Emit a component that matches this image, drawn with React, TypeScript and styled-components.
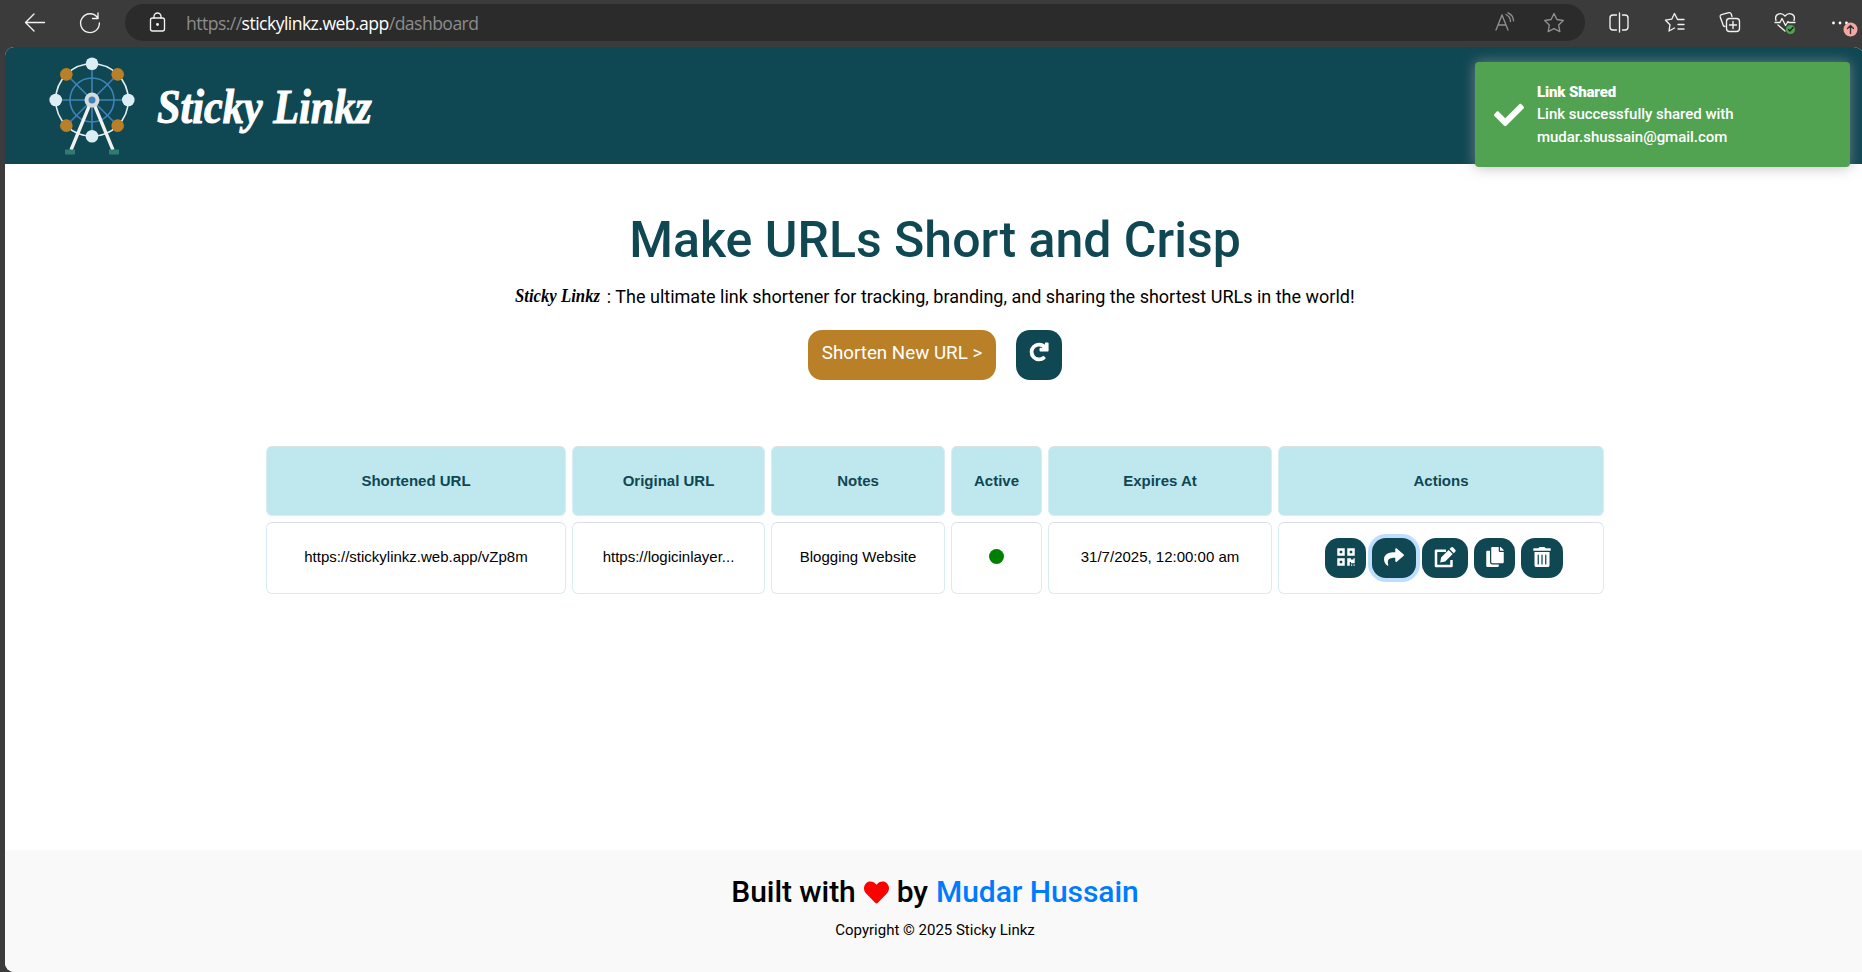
import React from "react";
import styled, { createGlobalStyle, css } from "styled-components";
import { FaQrcode, FaShare, FaCopy, FaTrashAlt, FaRedo, FaHeart, FaCheck } from "react-icons/fa";

const Global = createGlobalStyle`
  * { box-sizing: border-box; }
  body { margin: 0; background: #3b3b3b; overflow: hidden; font-family: Roboto, sans-serif; color: #000; }
  h1, h2, p { margin: 0; font-weight: 400; }
  button { border: 0; padding: 0; font: inherit; }
`;

const Window = styled.div`
  width: 1862px;
  height: 972px;
  display: flex;
  flex-direction: column;
  overflow: hidden;
`;

const BrowserBar = styled.div`
  height: 47px;
  flex: none;
  display: flex;
  align-items: flex-start;
  padding-top: 4px;
`;

const BarIcon = styled.svg<{ $w?: number; $left?: number; $dim?: boolean }>`
  width: ${(p) => p.$w ?? 22}px;
  height: 22px;
  flex: none;
  overflow: visible;
  margin: 8px 0 0 ${(p) => p.$left ?? 0}px;
  fill: none;
  stroke: ${(p) => (p.$dim ? "#909090" : "#f2f2f2")};
  stroke-width: 1.35;
  stroke-linecap: round;
  stroke-linejoin: round;
`;

const AddressBar = styled.div`
  width: 1460px;
  height: 37px;
  margin-left: 24px;
  border-radius: 19px;
  background: #2b2b2b;
  display: flex;
`;

const Address = styled.div`
  flex: 1;
  margin-left: 17px;
  font: 17.6px/38px "Open Sans", sans-serif;
  letter-spacing: -0.55px;
  color: #8c8c8c;
  b { font-weight: 400; color: #fff; }
`;

const Page = styled.div`
  width: 1860px;
  height: 925px;
  flex: none;
  margin-left: 5px;
  display: flex;
  flex-direction: column;
  background: #fff;
  border-radius: 9px 12px 0 9px;
  overflow: hidden;
`;

const Header = styled.header`
  height: 117px;
  flex: none;
  background: #0f4753;
  display: flex;
`;

const Wheel = styled.svg`
  width: 90px;
  height: 100px;
  margin: 9px 0 0 42px;
`;

const Script = styled.span<{ $size: number; $stretch: number }>`
  display: inline-block;
  font: italic 700 ${(p) => p.$size}px/1.2 "Liberation Serif", serif;
  transform: scaleX(${(p) => p.$stretch});
  transform-origin: left center;
  white-space: nowrap;
`;

const Brand = styled.div`
  margin: 31px 0 0 20px;
  color: #fff;
  -webkit-text-stroke: 1px #fff;
`;

const Main = styled.main`
  flex: 1;
  display: flex;
  flex-direction: column;
  align-items: center;
`;

const Title = styled.h1`
  margin-top: 46px;
  font-size: 50px;
  line-height: 60px;
  font-weight: 500;
  color: #0f4753;
  white-space: nowrap;
`;

const Tagline = styled.p`
  margin-top: 12px;
  height: 28px;
  display: flex;
  align-items: center;
  font-size: 18px;
  white-space: pre;
`;

const TagBrand = styled.span`
  width: 87px;
`;

const Cta = styled.div`
  display: flex;
  gap: 20px;
  margin-top: 20px;
`;

const CtaButton = styled.button<{ $w: number; $tone: string }>`
  width: ${(p) => p.$w}px;
  height: 50px;
  border-radius: 14px;
  background: ${(p) => p.$tone};
  color: #fff;
  font-size: 18.75px;
  display: flex;
  justify-content: center;
  align-items: center;
  padding-bottom: 5px;
  white-space: nowrap;
`;

const RefreshIcon = styled(FaRedo)`
  stroke: #fff;
  stroke-width: 34px;
  margin-bottom: 1px;
  overflow: visible;
`;

const Table = styled.div`
  display: grid;
  grid-template-columns: 300px 193px 174px 91px 224px 326px;
  grid-template-rows: 70px 72px;
  gap: 6px;
  margin-top: 66px;
  font: 15px "Liberation Sans", sans-serif;
`;

const Cell = styled.div<{ $head?: boolean }>`
  border: 1px solid #d9ecf2;
  border-top-color: #dadfe2;
  border-radius: 6px;
  display: flex;
  align-items: center;
  justify-content: center;
  padding-bottom: 3px;
  white-space: nowrap;
  ${(p) => p.$head && css`
    background: #bee7ee;
    color: #0f4753;
    font-weight: 700;
    padding-bottom: 2px;
  `}
`;

const Dot = styled.span`
  width: 15px;
  height: 15px;
  border-radius: 50%;
  background: #008000;
`;

const Actions = styled.div`
  display: flex;
  gap: 6px;
  padding: 3px 0 0 6px;
`;

const Action = styled.button<{ $w: number; $focus?: boolean }>`
  width: ${(p) => p.$w}px;
  height: 40px;
  border-radius: 14px;
  background: #0f4753;
  color: #fff;
  display: flex;
  align-items: center;
  justify-content: center;
  padding-bottom: 2px;
  box-shadow: ${(p) => (p.$focus ? "0 0 0 4px #bfdeff" : "none")};
`;

const Footer = styled.footer`
  height: 122px;
  flex: none;
  background: #f9f9f9;
  display: flex;
  flex-direction: column;
  align-items: center;
`;

const Credit = styled.h2`
  margin-top: 22px;
  height: 38px;
  display: flex;
  align-items: center;
  font-size: 30px;
  letter-spacing: -0.06px;
  font-weight: 500;
  white-space: nowrap;
  a { color: #007bff; margin-left: 8px; }
`;

const Heart = styled(FaHeart)`
  color: #f00;
  margin: 2px 8px 0;
`;

const Copyright = styled.p`
  margin-top: 11px;
  font-size: 15px;
  line-height: 18px;
`;

const Toast = styled.div`
  position: absolute;
  left: 1475px;
  top: 62px;
  width: 375px;
  height: 105px;
  border-radius: 4px;
  background: #51a351;
  box-shadow: 0 0 14px rgba(153, 153, 153, 0.7);
  color: #fff;
  display: flex;
  font-size: 15px;
  line-height: 22.5px;
`;

const ToastCheck = styled(FaCheck)`
  margin: 38px 0 0 19px;
`;

const ToastText = styled.div`
  margin: 18.6px 0 0 13px;
  font-weight: 500;
  letter-spacing: -0.02px;
  b { display: block; font-weight: 900; letter-spacing: -0.15px; }
`;

const spokes = [0, 45, 90, 135];
const cabins = [0, 1, 2, 3, 4, 5, 6, 7];

function FerrisWheel() {
  return (
    <Wheel viewBox="0 0 90 100">
      <circle cx="45" cy="44" r="36.3" fill="none" stroke="#e4eef1" strokeWidth="1.6" />
      <g fill="none" stroke="#3f83ba" strokeWidth="1.6">
        <circle cx="45" cy="44" r="22" />
        {spokes.map((a) => <path key={a} d="M9 44H81" transform={`rotate(${a} 45 44)`} />)}
      </g>
      <path d="M43 48 24 94M47 48 66 94" stroke="#f0f0ef" strokeWidth="3.3" />
      <path d="M18 93.500h10v5H18zM62 93.500h10v5H62z" fill="#2f7c6f" />
      {cabins.map((i) => (
        <circle
          key={i}
          cx={45 + 36.3 * Math.cos((i * Math.PI) / 4)}
          cy={44 + 36.3 * Math.sin((i * Math.PI) / 4)}
          r="6.3"
          fill={i % 2 ? "#ba8027" : "#dceef4"}
        />
      ))}
      <circle cx="45" cy="44" r="7.5" fill="#d8d9dc" />
      <circle cx="45" cy="44" r="3.5" fill="#3f83ba" />
    </Wheel>
  );
}

function EditIcon() {
  return (
    <svg width="23" height="21" viewBox="0 0 23 21">
      <path d="M12 3.700H2V19h15.500v-6" fill="none" stroke="#fff" strokeWidth="2.500" strokeLinejoin="round" />
      <path d="m6.200 15.500.9-5L14.600 3l4.100 4.100-7.500 7.500zM15.600 2 17 .6a1.500 1.500 0 0 1 2.100 0l2.100 2.100a1.500 1.500 0 0 1 0 2.100l-1.400 1.400z" fill="#fff" />
    </svg>
  );
}

export default function App() {
  return (
    <>
      <Global />
      <Window>
        <BrowserBar>
          <BarIcon $left={24} viewBox="0 0 22 22"><path d="M20.500 10.500H1.500M10 2 1.500 10.500 10 19" /></BarIcon>
          <BarIcon $left={33} viewBox="0 0 22 22"><path d="M18.500 5.500A9.400 9.400 0 1 0 20.400 11M19 1v5.500h-5.500" /></BarIcon>
          <AddressBar>
            <BarIcon $left={22} viewBox="0 0 22 22"><rect x="3.500" y="6" width="14" height="13" rx="2" /><path d="M7 6V4.500a3.500 3.500 0 0 1 7 0V6" /><circle cx="10.500" cy="12.500" r=".8" fill="#fff" /></BarIcon>
            <Address>https://<b>stickylinkz.web.app</b>/dashboard</Address>
            <BarIcon $dim viewBox="0 0 22 22"><path d="m2 18 6-15 6 15M4 13h8M12 2.500c3 1.500 4.500 4 4.500 7M14 .8c3.500 1.700 5.500 4.700 5.500 8" /></BarIcon>
            <BarIcon $dim $left={27} viewBox="0 0 22 22"><path d="m11 1.500 2.900 6 6.400 1-4.600 4.600 1.100 6.500-5.800-3-5.800 3 1.100-6.500-4.600-4.600 6.400-1z" /></BarIcon>
            <BarIcon $w={20} viewBox="0 0 22 22" />
          </AddressBar>
          <BarIcon $left={23} viewBox="0 0 22 22"><path d="M8.500 3H5a3 3 0 0 0-3 3v9a3 3 0 0 0 3 3h3.500M14.500 3H17a3 3 0 0 1 3 3v9a3 3 0 0 1-3 3h-2.500M11.500 1v19" /></BarIcon>
          <BarIcon $left={34} viewBox="0 0 22 22"><path d="M20 7.500h-6.500L10.500 1.500 7.700 7.200l-6.200 1 4.500 4.500L5 19l5.500-3M14 12.500h6M14 17h6" /></BarIcon>
          <BarIcon $left={33} viewBox="0 0 22 22"><path d="M6 14.500 4.500 14 1.200 5a2 2 0 0 1 1.200-2.300l7.500-2a2 2 0 0 1 2.300 1.200l.8 2.600" /><rect x="7.500" y="6.500" width="13" height="13" rx="3" /><path d="M14 9.500v7M10.500 13h7" /></BarIcon>
          <BarIcon $left={33} viewBox="0 0 22 22"><path d="M2 8.500C0 2 7-.5 11 4c4-4.500 11-2 9 4.500M1 10.500h5l2-4 3.500 7 2.500-4 1 1h6M4 13l7 6" /><circle cx="16.500" cy="17.500" r="4.500" fill="#4ca64f" stroke="none" /><path d="m14.500 17.500 1.500 1.500 3-3.500" stroke="#222" /></BarIcon>
          <BarIcon $left={35} viewBox="0 0 22 22"><g fill="#fff" stroke="none"><circle cx="2.500" cy="11" r="1.400" /><circle cx="9" cy="11" r="1.400" /><circle cx="15.500" cy="11" r="1.400" /></g><circle cx="19.500" cy="17.500" r="7" fill="#f4a6a2" stroke="none" /><path d="M19.500 21.500v-8m-3 3 3-3 3 3" stroke="#333" /></BarIcon>
        </BrowserBar>
        <Page>
          <Header>
            <FerrisWheel />
            <Brand><Script $size={48} $stretch={0.88}>Sticky Linkz</Script></Brand>
          </Header>
          <Main>
            <Title>Make URLs Short and Crisp</Title>
            <Tagline>
              <TagBrand><Script $size={19} $stretch={0.88}>Sticky Linkz</Script></TagBrand>
              <span> : The ultimate link shortener for tracking, branding, and sharing the shortest URLs in the world!</span>
            </Tagline>
            <Cta>
              <CtaButton $w={188} $tone="#ba8027">Shorten New URL &gt;</CtaButton>
              <CtaButton $w={46} $tone="#0f4753"><RefreshIcon size={18} /></CtaButton>
            </Cta>
            <Table>
              {["Shortened URL", "Original URL", "Notes", "Active", "Expires At", "Actions"].map((h) => <Cell $head key={h}>{h}</Cell>)}
              <Cell>https://stickylinkz.web.app/vZp8m</Cell>
              <Cell>https://logicinlayer...</Cell>
              <Cell>Blogging Website</Cell>
              <Cell><Dot /></Cell>
              <Cell>31/7/2025, 12:00:00 am</Cell>
              <Cell>
                <Actions>
                  <Action $w={41}><FaQrcode size={20} /></Action>
                  <Action $w={44} $focus><FaShare size={20} /></Action>
                  <Action $w={46}><EditIcon /></Action>
                  <Action $w={41}><FaCopy size={20} /></Action>
                  <Action $w={42}><FaTrashAlt size={20} /></Action>
                </Actions>
              </Cell>
            </Table>
          </Main>
          <Footer>
            <Credit>Built with <Heart size={25} /> by <a>Mudar Hussain</a></Credit>
            <Copyright>Copyright © 2025 Sticky Linkz</Copyright>
          </Footer>
        </Page>
        <Toast>
          <ToastCheck size={30} />
          <ToastText><b>Link Shared</b>Link successfully shared with<br />mudar.shussain@gmail.com</ToastText>
        </Toast>
      </Window>
    </>
  );
}
